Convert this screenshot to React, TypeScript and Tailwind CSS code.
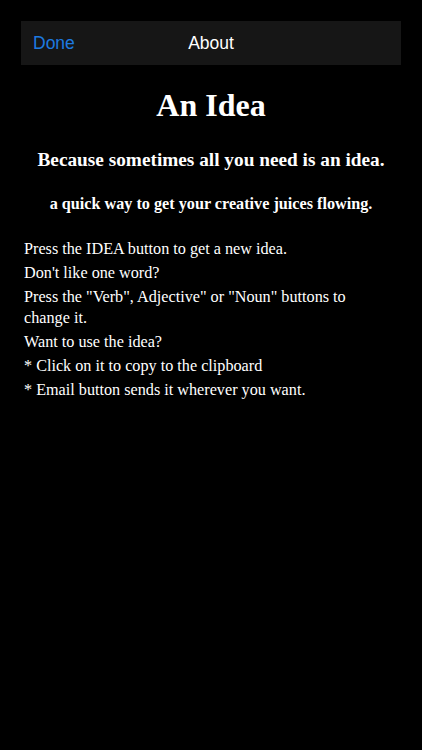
export default function App() {
  const lines = [
    "Press the IDEA button to get a new idea.",
    "Don't like one word?",
    'Press the "Verb", Adjective" or "Noun" buttons to change it.',
    "Want to use the idea?",
    "* Click on it to copy to the clipboard",
    "* Email button sends it wherever you want.",
  ];

  return (
    <div className="w-[422px] h-[750px] bg-black overflow-hidden">
      {/* Nav bar */}
      <div className="pt-[21px] px-[21px]">
        <div className="relative h-[44px] bg-[#161616] flex items-center justify-center font-['Liberation_Sans',Arial,sans-serif]">
          <span className="absolute left-[12px] text-[17.5px] text-[#1d7ae0]">Done</span>
          <span className="text-[17.5px] text-white">About</span>
        </div>
      </div>

      {/* Content */}
      <div className="font-['Liberation_Serif','Times_New_Roman',serif] text-white">
        <h1 className="mt-[20px] text-center text-[32px] font-bold leading-[40px]">An Idea</h1>
        <p className="mt-[23px] text-center text-[19.3px] font-bold leading-[24px]">
          Because sometimes all you need is an idea.
        </p>
        <p className="mt-[22px] text-center text-[16.2px] font-bold leading-[20px]">
          a quick way to get your creative juices flowing.
        </p>
        <div className="mt-[25px] pl-[24px] pr-[40px] flex flex-col gap-[3px]">
          {lines.map((line) => (
            <p key={line} className="text-[16.2px] leading-[21px]">
              {line}
            </p>
          ))}
        </div>
      </div>
    </div>
  );
}
